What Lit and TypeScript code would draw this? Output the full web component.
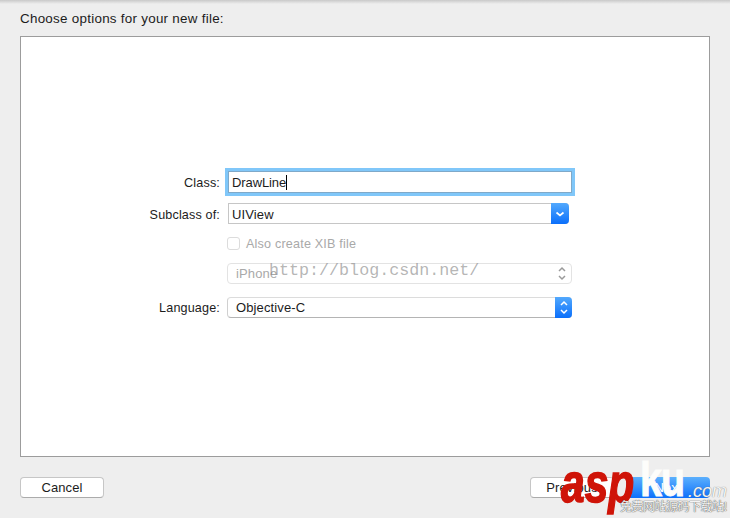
import { LitElement, html, css, svg } from "lit";
import { customElement } from "lit/decorators.js";

const chevDown = svg`<path d="M-3.5 -1.5 L0 1.5 L3.5 -1.5" fill="none" stroke-width="1.7"/>`;
const chevBoth = svg`<path d="M-3 -2.5 L0 -5.5 L3 -2.5 M-3 2.5 L0 5.5 L3 2.5" fill="none" stroke-width="1.5"/>`;

@customElement("app-root")
export class AppRoot extends LitElement {
  static styles = css`
    :host { display: block; width: 730px; height: 518px; font-family: "Liberation Sans", Arial, sans-serif; font-size: 13px; color: #1c1c1c; }
    .page { position: relative; height: 518px; overflow: hidden; background: #eeeeee; display: flex; flex-direction: column; }
    .top { height: 4px; flex: none; background: linear-gradient(#c9c9c9, #eeeeee); }
    .title { height: 32px; flex: none; padding: 7px 0 0 20px; box-sizing: border-box; line-height: 16px; font-size: 13.4px; letter-spacing: 0.02em; }
    .panel { margin: 0 20px; height: 421px; flex: none; box-sizing: border-box; border: 1px solid #9c9c9c; background: #fff; padding-top: 134px; display: flex; flex-direction: column; }
    .row { display: grid; grid-template-columns: 199px 1fr; align-items: center; margin-top: 13px; }
    .row.first { margin-top: 0; }
    .row.second { margin-top: 10px; }
    .label { text-align: right; line-height: 16px; font-size: 12.6px; letter-spacing: 0.012em; }
    .label.low { padding-top: 2px; }
    .control { margin-left: 7px; box-sizing: border-box; display: flex; align-items: center; height: 21px; line-height: 16px; letter-spacing: 0.01em; }
    .input { margin-left: 8px; width: 344px; height: 22px; border: 1px solid #7fa9c9; box-shadow: 0 0 0 3px #80c7f9; background: #fff; padding: 2px 0 0 3px; font-size: 13px; letter-spacing: -0.1px; }
    .caret { display: inline-block; width: 1px; height: 15px; background: #000; vertical-align: -3px; }
    .combo { margin-left: 8px; width: 341px; border: 1px solid #c6c6c6; border-right: 0; padding-left: 3px; justify-content: space-between; border-radius: 0 4px 4px 0; }
    .combo .text { padding-top: 2px; }
    .popup { width: 345px; padding-left: 8px; justify-content: space-between; background: #fff; border: 1px solid #d0d0d0; border-top-color: #dcdcdc; border-bottom-color: #b4b4b4; border-radius: 4px; }
    .popup.off { width: 344.5px; color: #a9a9a9; border-color: #e3e3e3; }
    .popup.on { border-right: 0; }
    .stepper, .drop { flex: none; height: 21px; margin: -1px 0; display: flex; align-items: center; justify-content: center; background: linear-gradient(#53a9fd, #0a6ffb); border-radius: 0 4px 4px 0; }
    .stepper { width: 17px; }
    .drop { width: 18px; }
    .stepper svg, .drop svg { stroke: #fff; }
    .stepper.off { background: none; }
    .stepper.off svg { stroke: #9a9a9a; }
    .check { height: 13px; margin-left: 7px; color: #a9a9a9; font-size: 12.6px; letter-spacing: 0.015em; gap: 6px; }
    .box { width: 13px; height: 13px; box-sizing: border-box; border: 1px solid #dcdcdc; border-radius: 3px; background: #fff; flex: none; }
    .footer { display: flex; justify-content: space-between; padding: 20px 20px 0; }
    .group { display: flex; gap: 12px; }
    .btn { width: 84px; height: 21px; box-sizing: border-box; text-align: center; line-height: 19px; font-size: 13px; letter-spacing: 0.01em; background: #fff; border: 1px solid #c6c6c6; border-bottom-color: #ababab; border-radius: 4px; }
    .btn.primary { border: 0; line-height: 21px; color: #fff; background: linear-gradient(#5cb0fd, #0d70fb); }
    .url { position: absolute; left: 269px; top: 261px; font-family: "Liberation Mono", monospace; font-size: 16.7px; line-height: 20px; color: rgba(135,135,135,0.62); white-space: nowrap; }
    .mark { position: absolute; left: 0; top: 0; width: 730px; height: 518px; pointer-events: none; }
    .asp, .ku, .com, .cn { position: absolute; white-space: nowrap; }
    .asp { left: 561px; top: 455px; font: italic bold 56px/56px "Liberation Sans", sans-serif; color: #cf1408; -webkit-text-stroke: 1.5px #cf1408; transform: scaleX(0.76); transform-origin: left top; }
    .ku { left: 640px; top: 456px; font: bold 48px/48px "Liberation Sans", sans-serif; color: #fdfdfb; -webkit-text-stroke: 1px #fdfdfb; transform: scaleX(0.82); transform-origin: left top; letter-spacing: -1px; }
    .com { left: 688px; top: 480px; font: italic 18px/22px "Liberation Sans", sans-serif; color: #f4f4f4; text-shadow: 0 0 1px #666; }
    .cn { left: 620px; top: 499px; font: 12px/14px "Noto Sans CJK SC", sans-serif; letter-spacing: -0.5px; color: #f4f4f4; text-shadow: 0 0 1px #555, 0 0 1px #555; }
  `;

  render() {
    return html`
      <div class="page">
        <div class="top"></div>
        <div class="title">Choose options for your new file:</div>
        <div class="panel">
          <div class="row first">
            <div class="label low">Class:</div>
            <div class="control input"><span>DrawLine<span class="caret"></span></span></div>
          </div>
          <div class="row second">
            <div class="label low">Subclass of:</div>
            <div class="control combo"><span class="text">UIView</span>
              <span class="drop"><svg width="12" height="10" viewBox="-6 -5 12 10">${chevDown}</svg></span></div>
          </div>
          <div class="row">
            <div></div>
            <div class="control check"><span class="box"></span><span>Also create XIB file</span></div>
          </div>
          <div class="row">
            <div></div>
            <div class="control popup off"><span>iPhone</span>
              <span class="stepper off"><svg width="12" height="15" viewBox="-6 -7.5 12 15">${chevBoth}</svg></span></div>
          </div>
          <div class="row">
            <div class="label">Language:</div>
            <div class="control popup on"><span>Objective-C</span>
              <span class="stepper"><svg width="12" height="15" viewBox="-6 -7.5 12 15">${chevBoth}</svg></span></div>
          </div>
        </div>
        <div class="footer">
          <div class="btn">Cancel</div>
          <div class="group">
            <div class="btn">Previous</div>
            <div class="btn primary">Next</div>
          </div>
        </div>
        <div class="url">http://blog.csdn.net/</div>
        <div class="mark">
          <span class="asp">asp</span>
          <span class="ku">ku</span>
          <span class="com">.com</span>
          <span class="cn">免费网站源码下载站!</span>
        </div>
      </div>
    `;
  }
}
